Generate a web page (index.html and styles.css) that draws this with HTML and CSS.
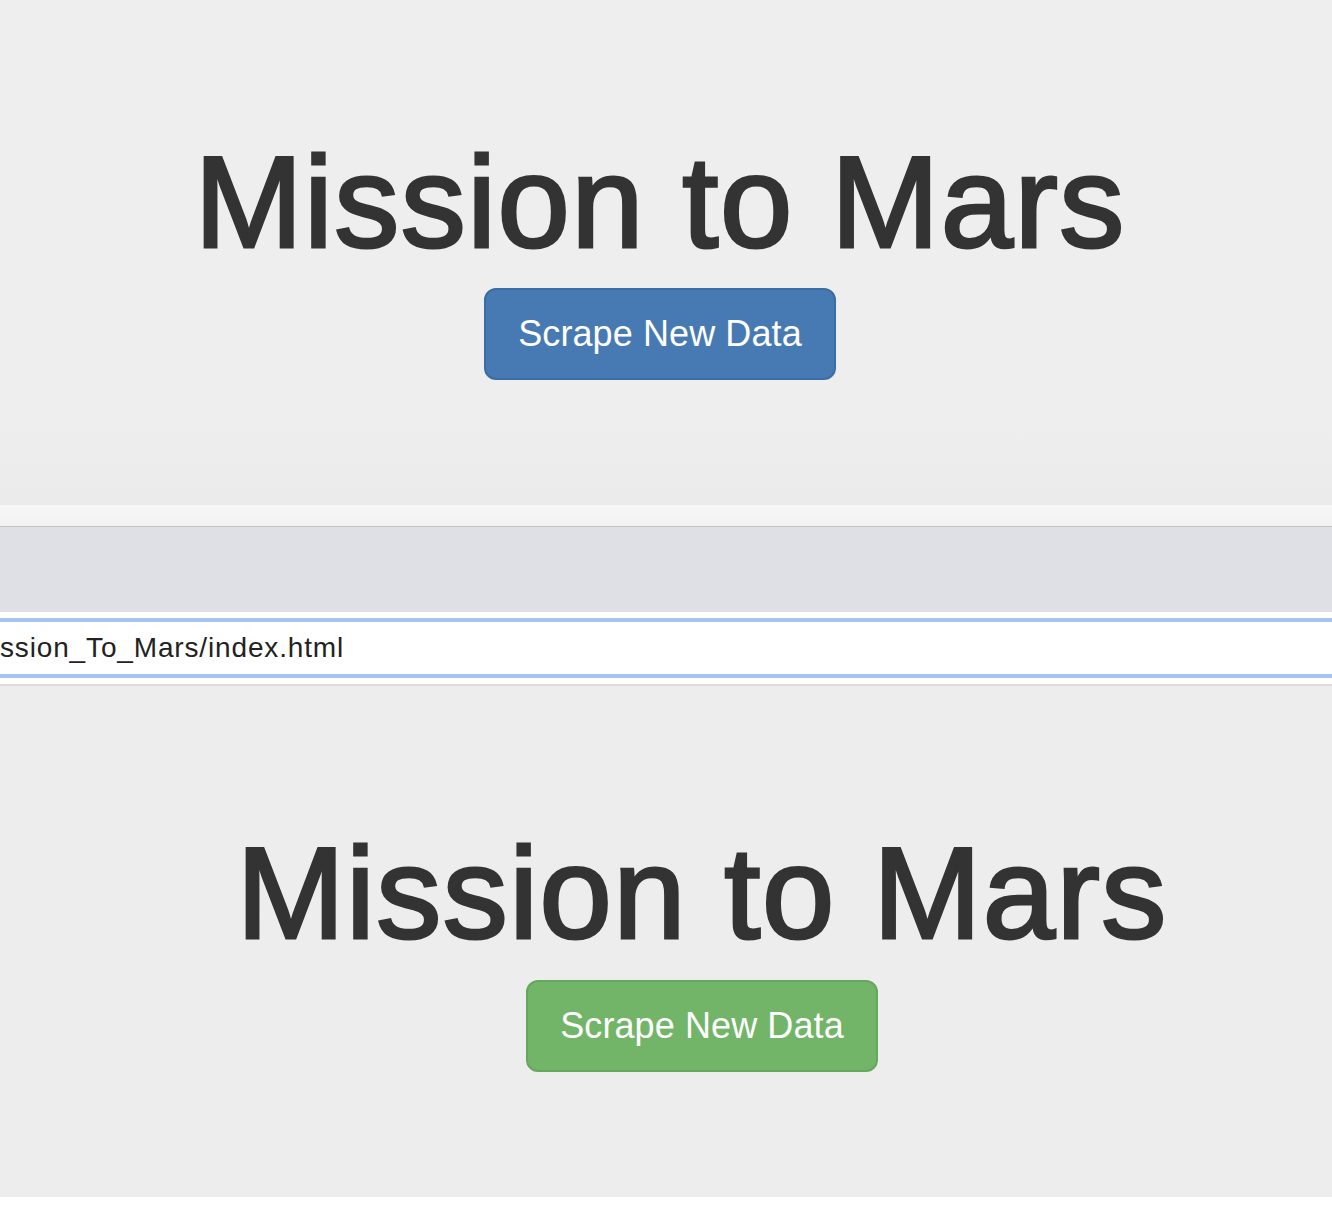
FILE: index.html
```html
<!DOCTYPE html>
<html lang="en">
<head>
<meta charset="utf-8">
<title>Mission to Mars</title>
<link rel="stylesheet" href="styles.css">
</head>
<body>
  <section class="jumbo jumbo-top">
    <h1 class="title">Mission to Mars</h1>
    <button class="btn btn-primary" type="button">Scrape New Data</button>
  </section>

  <div class="chrome">
    <div class="chrome-strip"></div>
    <div class="chrome-tabbar"></div>
    <div class="chrome-address">
      <div class="address-field">ssion_To_Mars/index.html</div>
    </div>
  </div>

  <section class="jumbo jumbo-bottom">
    <h1 class="title">Mission to Mars</h1>
    <button class="btn btn-success" type="button">Scrape New Data</button>
  </section>
</body>
</html>
```

FILE: styles.css
```css
html, body {
  margin: 0;
  padding: 0;
  background: #ffffff;
}

body {
  width: 1332px;
  font-family: "Liberation Sans", Arial, Helvetica, sans-serif;
  color: #333333;
}

.jumbo {
  display: flex;
  flex-direction: column;
  align-items: center;
  box-sizing: border-box;
}

.jumbo-top {
  height: 505px;
  padding: 130px 12px 0 0;
  background: linear-gradient(to bottom, #eeeeee 0%, #eeeeee 80%, #ebebeb 100%);
}

.jumbo-bottom {
  height: 511px;
  padding: 135px 0 0 72px;
  background: #ededed;
}

.title {
  margin: 0;
  font-size: 130px;
  line-height: 144px;
  font-weight: 400;
  color: #333333;
  -webkit-text-stroke: 3px #333333;
  letter-spacing: 1.4px;
  white-space: nowrap;
}

.jumbo-top .title {
  margin-bottom: 14px;
}

.jumbo-bottom .title {
  margin-bottom: 15px;
}

.btn {
  box-sizing: border-box;
  height: 92px;
  padding: 0 30px;
  border-radius: 12px;
  border: 2px solid transparent;
  font-family: "Liberation Sans", Arial, Helvetica, sans-serif;
  font-size: 36px;
  line-height: 48px;
  letter-spacing: 0.1px;
  color: #ffffff;
  cursor: pointer;
}

.btn-primary {
  width: 352px;
  background: #477ab3;
  border-color: #3a6ca5;
}

.btn-success {
  width: 352px;
  background: #72b568;
  border-color: #65a85d;
}

.chrome {
  display: flex;
  flex-direction: column;
}

.chrome-strip {
  height: 21px;
  background: linear-gradient(to bottom, #f6f6f6, #f2f2f2);
  border-bottom: 1px solid #c4c4c4;
}

.chrome-tabbar {
  height: 85px;
  background: #dfe0e5;
}

.chrome-address {
  background: #ffffff;
  padding: 6px 0;
  border-bottom: 2px solid #dcdcdc;
}

.address-field {
  box-sizing: border-box;
  height: 60px;
  border-top: 4px solid #a8c2f2;
  border-bottom: 4px solid #a8c2f2;
  padding: 0;
  font-family: "Liberation Sans", Arial, sans-serif;
  font-size: 28px;
  line-height: 52px;
  letter-spacing: 0.85px;
  color: #222222;
  white-space: nowrap;
  overflow: hidden;
}
```
